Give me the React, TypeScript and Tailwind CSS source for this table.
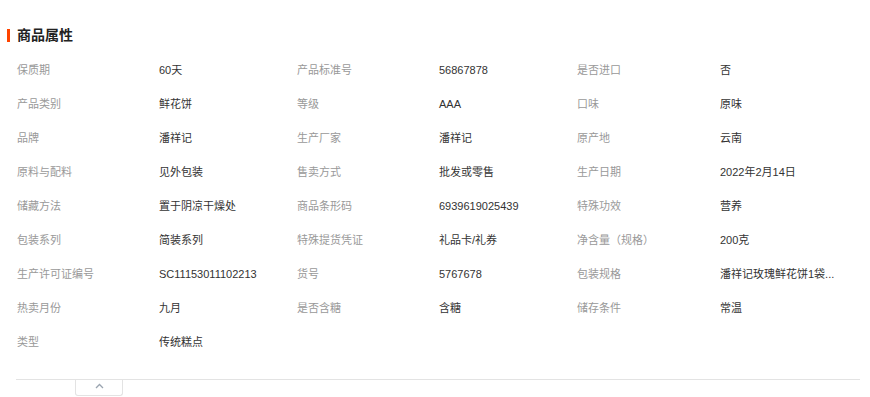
import React from 'react';

// 商品属性 rows, three pairs per row
const ATTRS: [string, string][] = [
  ['保质期', '60天'],
  ['产品标准号', '56867878'],
  ['是否进口', '否'],
  ['产品类别', '鲜花饼'],
  ['等级', 'AAA'],
  ['口味', '原味'],
  ['品牌', '潘祥记'],
  ['生产厂家', '潘祥记'],
  ['原产地', '云南'],
  ['原料与配料', '见外包装'],
  ['售卖方式', '批发或零售'],
  ['生产日期', '2022年2月14日'],
  ['储藏方法', '置于阴凉干燥处'],
  ['商品条形码', '6939619025439'],
  ['特殊功效', '营养'],
  ['包装系列', '简装系列'],
  ['特殊提货凭证', '礼品卡/礼券'],
  ['净含量（规格）', '200克'],
  ['生产许可证编号', 'SC11153011102213'],
  ['货号', '5767678'],
  ['包装规格', '潘祥记玫瑰鲜花饼1袋...'],
  ['热卖月份', '九月'],
  ['是否含糖', '含糖'],
  ['储存条件', '常温'],
  ['类型', '传统糕点'],
];

const App = () => {
  return (
    <div
      className="w-[870px] h-[397px] bg-white overflow-hidden"
      style={{ fontFamily: '"Liberation Sans", "Noto Sans CJK SC", sans-serif' }}
    >
      {/* Title */}
      <div className="flex items-center pl-[7px] pt-[28px] h-[42px]">
        <span className="w-[3px] h-[13px] bg-[#ff4400]" />
        <span className="ml-[7px] text-[14px] leading-[14px] font-bold text-[#222]">商品属性</span>
      </div>

      {/* Attribute grid */}
      <div className="ml-[17px] mt-[11px] grid grid-cols-[142px_138px_142px_138px_143px_130px]">
        {ATTRS.map(([k, v]) => (
          <React.Fragment key={k}>
            <div className="h-[34px] flex items-center text-[11px] text-[#999] whitespace-nowrap">{k}</div>
            <div className="h-[34px] flex items-center text-[11px] text-[#333] whitespace-nowrap">{v}</div>
          </React.Fragment>
        ))}
      </div>

      {/* Collapse bar */}
      <div className="ml-[16px] mr-[10px] mt-[20px] border-t border-[#e3e3e3]">
        <div className="ml-[59px] w-[48px] h-[16px] border border-t-0 border-[#e3e3e3] rounded-b-[3px] flex items-center justify-center">
          <svg width="9" height="6" viewBox="0 0 9 6" className="-mt-[4px]">
            <path d="M1 5 L4.5 1.5 L8 5" fill="none" stroke="#9aa4b0" strokeWidth="1.3" />
          </svg>
        </div>
      </div>
    </div>
  );
};

export default App;
